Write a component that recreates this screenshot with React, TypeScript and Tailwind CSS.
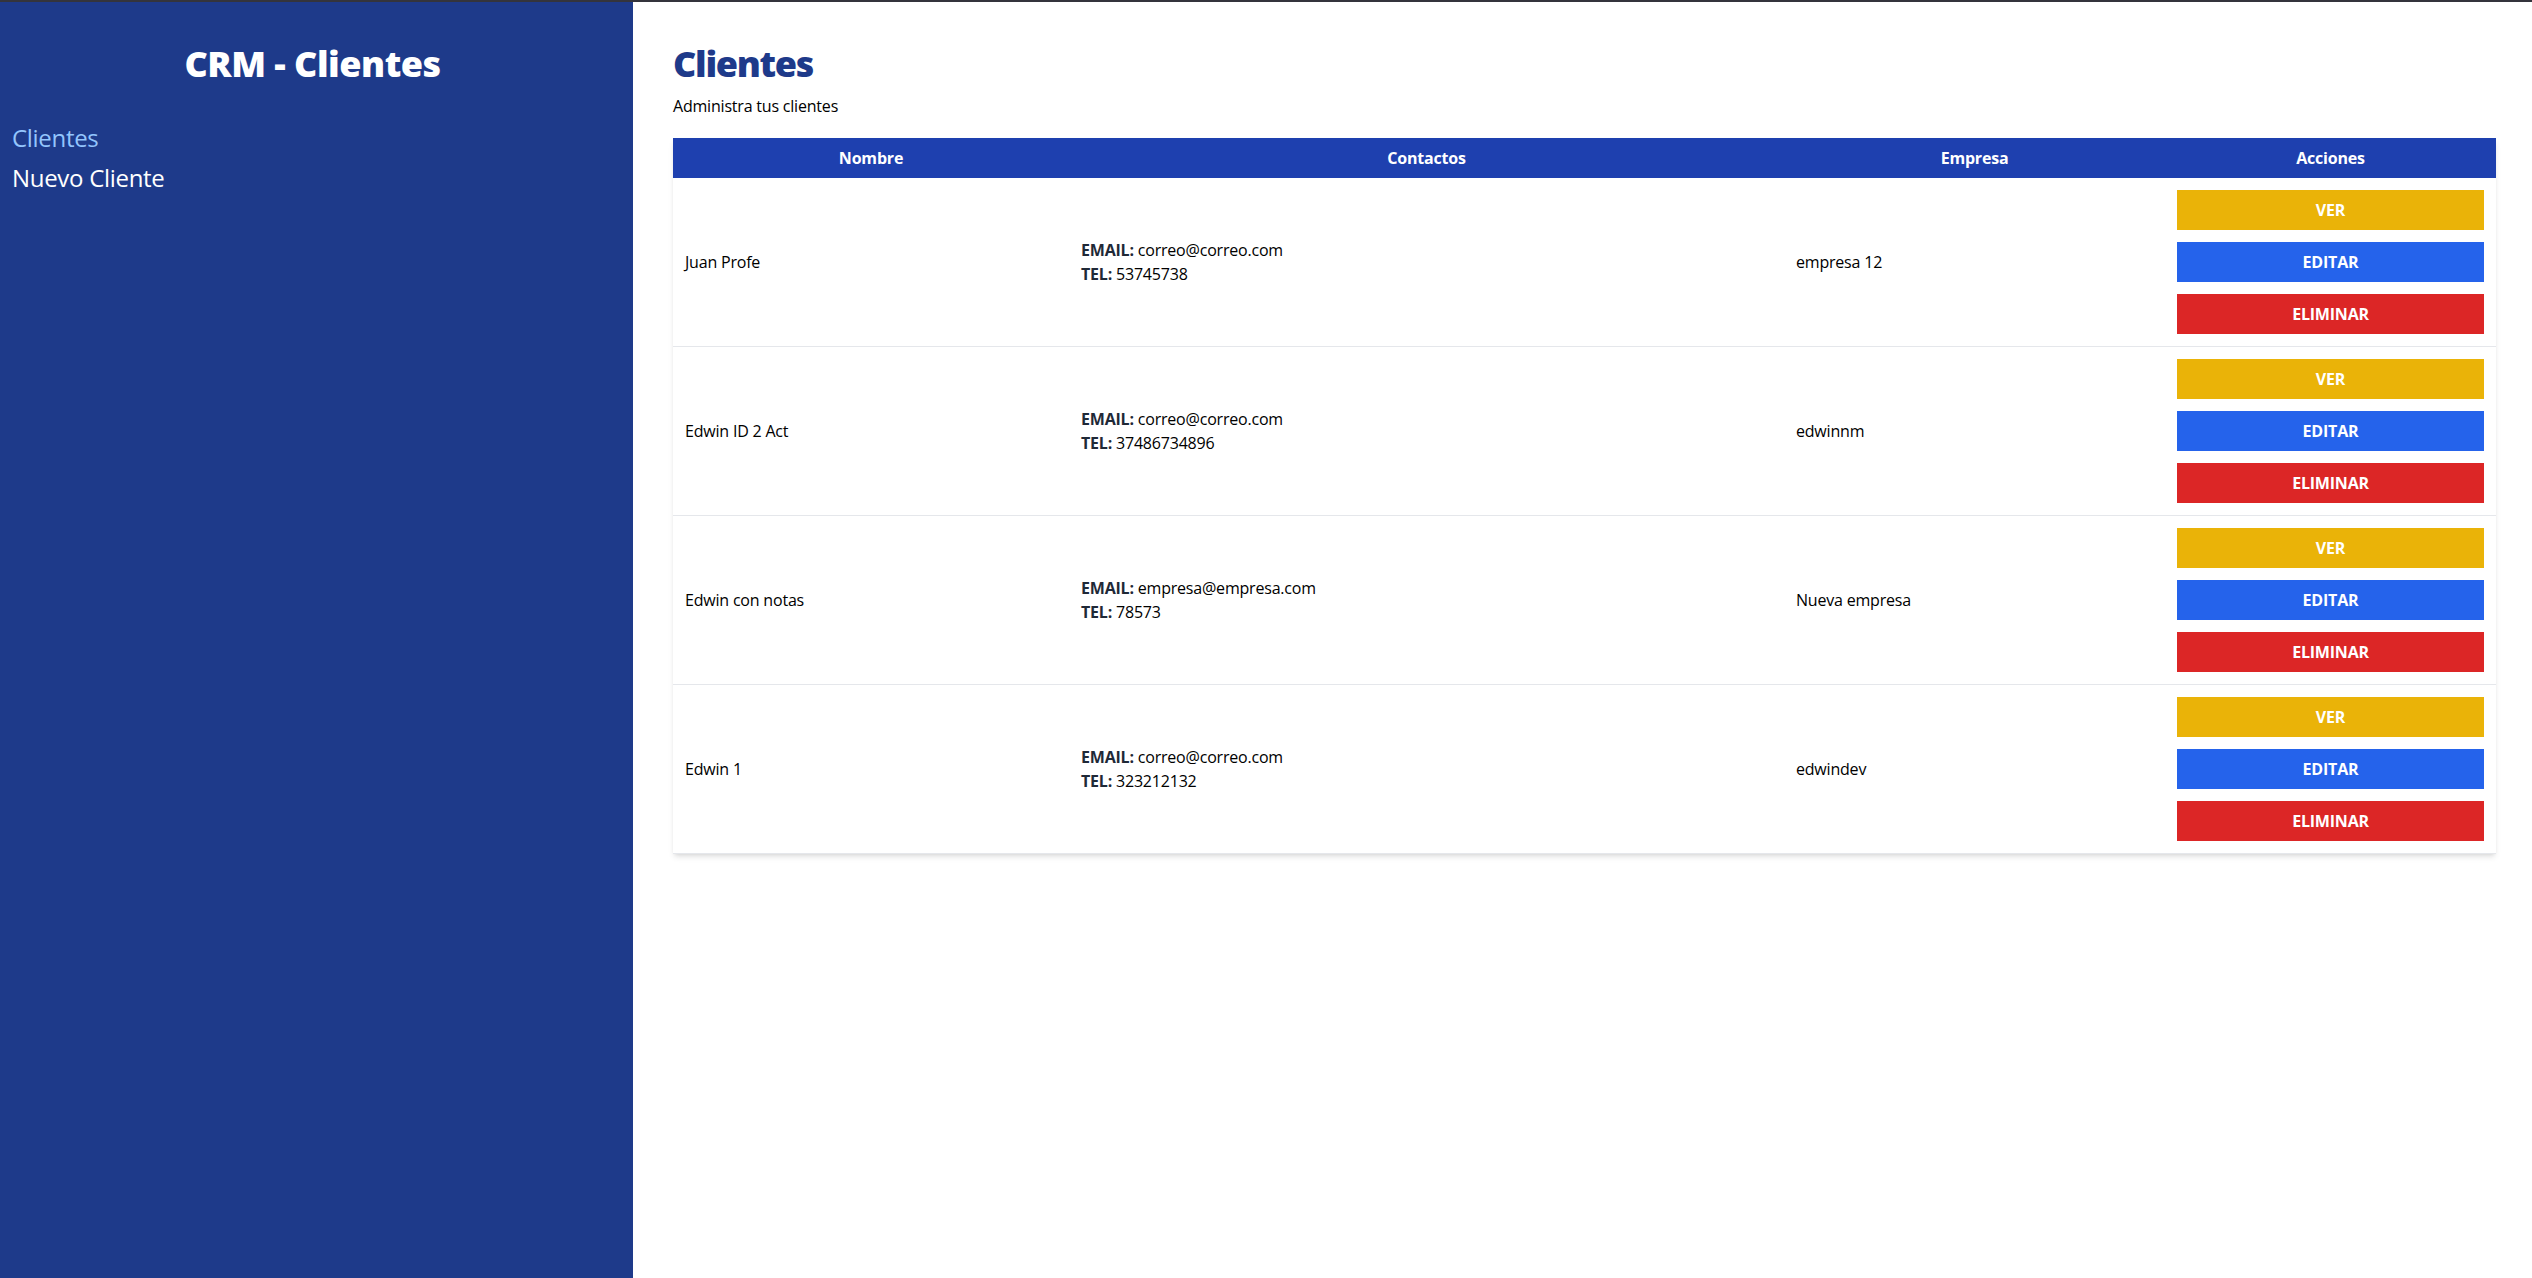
import React from "react";

type Cliente = { nombre: string; email: string; telefono: string; empresa: string };

const clientes: Cliente[] = [
  { nombre: "Juan Profe", email: "correo@correo.com", telefono: "53745738", empresa: "empresa 12" },
  { nombre: "Edwin ID 2 Act", email: "correo@correo.com", telefono: "37486734896", empresa: "edwinnm" },
  { nombre: "Edwin con notas", email: "empresa@empresa.com", telefono: "78573", empresa: "Nueva empresa" },
  { nombre: "Edwin 1", email: "correo@correo.com", telefono: "323212132", empresa: "edwindev" },
];

export default function App() {
  return (
    <div
      className="flex flex-col h-screen bg-white text-black"
      style={{ fontFamily: '"Open Sans", "Noto Sans", sans-serif' }}
    >
      <div className="h-[2px] bg-[#34343c] shrink-0" />
      <div className="flex flex-1 min-h-0">
        <aside className="w-1/4 bg-[#1e3a8a] pt-[42px]">
          <h2 className="pr-2 text-4xl leading-10 font-black text-center text-white tracking-[-0.5px]">
            CRM - Clientes
          </h2>
          <nav className="mt-[38px] px-3">
            <a href="#" className="block text-2xl leading-8 text-[#93c5fd] tracking-[-0.3px]">
              Clientes
            </a>
            <a href="#" className="block mt-2 text-2xl leading-8 text-white tracking-[-0.3px]">
              Nuevo Cliente
            </a>
          </nav>
        </aside>
        <main className="w-3/4 pt-10 pl-10 pr-9">
          <h1 className="mt-[2px] text-4xl leading-10 font-black text-[#1e3a8a] tracking-[-1.3px]">Clientes</h1>
          <p className="mt-[10px] text-base leading-6 tracking-[-0.2px]">Administra tus clientes</p>
          <table className="mt-5 w-full table-fixed shadow-md bg-white border-collapse tracking-[-0.2px]">
            <thead className="bg-[#1e40af] text-white">
              <tr>
                <th className="w-[396px] px-2 py-2 text-center font-bold text-base leading-6">Nombre</th>
                <th className="w-[715px] px-2 py-2 text-center font-bold text-base leading-6">Contactos</th>
                <th className="w-[381px] px-2 py-2 text-center font-bold text-base leading-6">Empresa</th>
                <th className="px-2 py-2 text-center font-bold text-base leading-6">Acciones</th>
              </tr>
            </thead>
            <tbody>
              {clientes.map((c) => (
                <tr key={c.nombre} className="border-b border-[#e5e7eb]">
                  <td className="p-3 align-middle text-base leading-6">{c.nombre}</td>
                  <td className="p-3 align-middle text-base leading-6">
                    <p>
                      <span className="text-[#1f2937] uppercase font-bold">Email: </span>
                      {c.email}
                    </p>
                    <p>
                      <span className="text-[#1f2937] uppercase font-bold">Tel: </span>
                      {c.telefono}
                    </p>
                  </td>
                  <td className="p-3 align-middle text-base leading-6">{c.empresa}</td>
                  <td className="p-3 align-middle">
                    <button
                      type="button"
                      className="block w-full bg-[#eab308] py-2 text-center text-base leading-6 font-bold uppercase text-white"
                    >
                      Ver
                    </button>
                    <button
                      type="button"
                      className="block w-full mt-3 bg-[#2563eb] py-2 text-center text-base leading-6 font-bold uppercase text-white"
                    >
                      Editar
                    </button>
                    <button
                      type="button"
                      className="block w-full mt-3 bg-[#dc2626] py-2 text-center text-base leading-6 font-bold uppercase text-white"
                    >
                      Eliminar
                    </button>
                  </td>
                </tr>
              ))}
            </tbody>
          </table>
        </main>
      </div>
    </div>
  );
}
